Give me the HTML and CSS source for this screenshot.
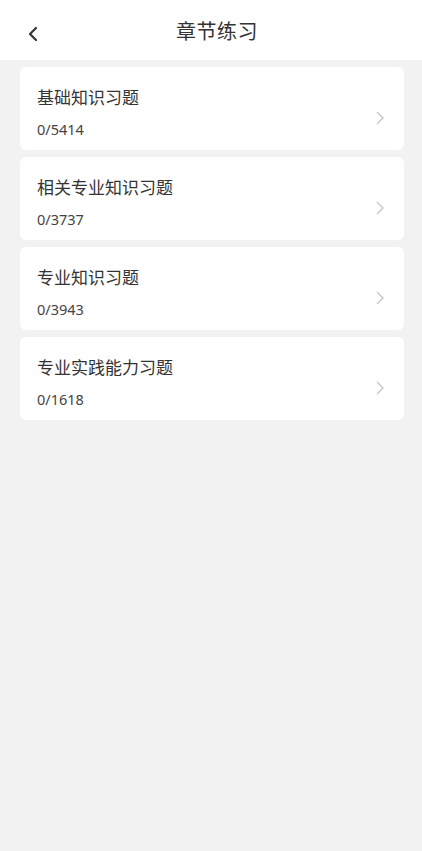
FILE: index.html
```html
<!DOCTYPE html>
<html lang="zh-CN">
<head>
  <meta charset="UTF-8">
  <meta name="viewport" content="width=device-width, initial-scale=1.0">
  <title>章节练习</title>
  <link rel="stylesheet" href="styles.css">
</head>
<body>
  <div class="header">
    <span class="back">
      <svg width="12" height="16" viewBox="0 0 12 16"><path d="M9 2 L3 8 L9 14" fill="none" stroke="#333" stroke-width="2.2" stroke-linecap="round" stroke-linejoin="round"/></svg>
    </span>
    <h1>章节练习</h1>
  </div>

  <div class="list">
    <div class="card">
      <div class="info">
        <div class="name">基础知识习题</div>
        <div class="count">0/5414</div>
      </div>
      <svg class="arrow" width="8" height="14" viewBox="0 0 8 14"><path d="M1 1 L7 7 L1 13" fill="none" stroke="#c4c4c4" stroke-width="1.3"/></svg>
    </div>
    <div class="card">
      <div class="info">
        <div class="name">相关专业知识习题</div>
        <div class="count">0/3737</div>
      </div>
      <svg class="arrow" width="8" height="14" viewBox="0 0 8 14"><path d="M1 1 L7 7 L1 13" fill="none" stroke="#c4c4c4" stroke-width="1.3"/></svg>
    </div>
    <div class="card">
      <div class="info">
        <div class="name">专业知识习题</div>
        <div class="count">0/3943</div>
      </div>
      <svg class="arrow" width="8" height="14" viewBox="0 0 8 14"><path d="M1 1 L7 7 L1 13" fill="none" stroke="#c4c4c4" stroke-width="1.3"/></svg>
    </div>
    <div class="card">
      <div class="info">
        <div class="name">专业实践能力习题</div>
        <div class="count">0/1618</div>
      </div>
      <svg class="arrow" width="8" height="14" viewBox="0 0 8 14"><path d="M1 1 L7 7 L1 13" fill="none" stroke="#c4c4c4" stroke-width="1.3"/></svg>
    </div>
  </div>
</body>
</html>
```

FILE: styles.css
```css
html, body {
  height: 100%;
}
body {
  margin: 0;
  background-color: #f2f2f2;
  font-family: "Noto Sans CJK SC", "Noto Sans", sans-serif;
  color: #333;
}
.header {
  position: relative;
  height: 60px;
  background-color: #fff;
  display: flex;
  align-items: center;
  justify-content: center;
}
.header h1 {
  margin: 0 0 0 12px;
  font-size: 20px;
  font-weight: 400;
  color: #333;
  letter-spacing: 0.5px;
}
.back {
  position: absolute;
  left: 27px;
  top: 26px;
  display: flex;
}
.list {
  padding: 7px 18px 0 20px;
  display: flex;
  flex-direction: column;
  gap: 7px;
}
.card {
  height: 83px;
  box-sizing: border-box;
  background-color: #fff;
  border-radius: 6px;
  padding: 0 20px 0 17px;
  display: flex;
  align-items: center;
  justify-content: space-between;
}
.info {
  margin-top: 7px;
}
.name {
  font-size: 17px;
  line-height: 22px;
  color: #333;
}
.count {
  margin-top: 11px;
  font-size: 14.5px;
  line-height: 20px;
  color: #444;
  font-family: "Noto Sans", sans-serif;
}
.arrow {
  margin-top: 19px;
}
```
